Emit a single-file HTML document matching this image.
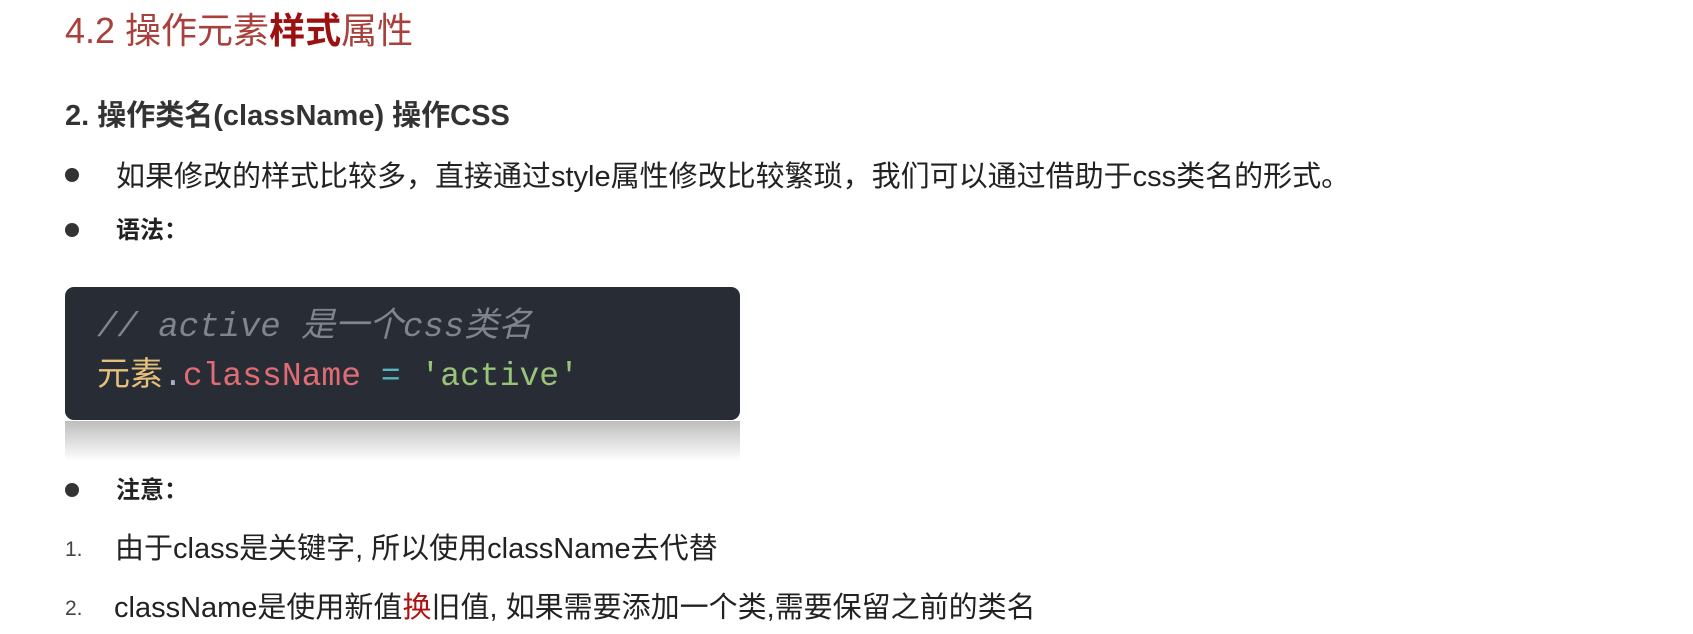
<!DOCTYPE html>
<html><head><meta charset="utf-8"><style>
body{margin:0;width:1693px;height:634px;background:#fff;position:relative;overflow:hidden;font-family:"Liberation Sans","Noto Sans CJK SC",sans-serif;color:#222}
.a{position:absolute;white-space:nowrap;line-height:40px;height:40px}
.dot{position:absolute;left:65px;width:14px;height:14px;border-radius:50%;background:#333}
.code{position:absolute;left:65px;top:287px;width:675px;height:133px;background:#282c34;border-radius:9px}
.m{font-family:"Liberation Mono","Noto Sans CJK SC",monospace;font-size:33px}
</style></head><body>
<div class="a" style="left:65px;top:11px;font-size:36px;color:#a8403c">4.2 操作元素<b style="color:#9b1010">样式</b>属性</div>
<div class="a" style="left:65px;top:96px;font-size:29px;font-weight:bold;color:#333">2. 操作类名(className) 操作CSS</div>
<div class="dot" style="top:168px"></div>
<div class="a" style="left:116px;top:157px;font-size:29px">如果修改的样式比较多，直接通过style属性修改比较繁琐，我们可以通过借助于css类名的形式。</div>
<div class="dot" style="top:223px"></div>
<div class="a" style="left:116px;top:211px;font-size:24px;font-weight:bold">语法：</div>
<div class="code">
<div class="a m" style="left:32px;top:21px;color:#7f848e;font-style:italic;font-size:34px">// active 是一个css类名</div>
<div class="a m" style="left:32px;top:70px"><span style="color:#e5c07b">元素</span><span style="color:#abb2bf">.</span><span style="color:#e06c75">className</span> <span style="color:#56b6c2">=</span> <span style="color:#98c379">'active'</span></div>
</div>
<div class="a" style="left:65px;top:421px;width:675px;height:40px;background:linear-gradient(#bdbdbd,#fff)"></div>
<div class="dot" style="top:483px"></div>
<div class="a" style="left:116px;top:471px;font-size:24px;font-weight:bold">注意：</div>
<div class="a" style="left:65px;top:530px;font-size:21px;color:#444">1.</div>
<div class="a" style="left:115px;top:529px;font-size:29px">由于class是关键字, 所以使用className去代替</div>
<div class="a" style="left:65px;top:589px;font-size:21px;color:#444">2.</div>
<div class="a" style="left:114px;top:588px;font-size:29px">className是使用新值<span style="color:#b01010">换</span>旧值, 如果需要添加一个类,需要保留之前的类名</div>
</body></html>
